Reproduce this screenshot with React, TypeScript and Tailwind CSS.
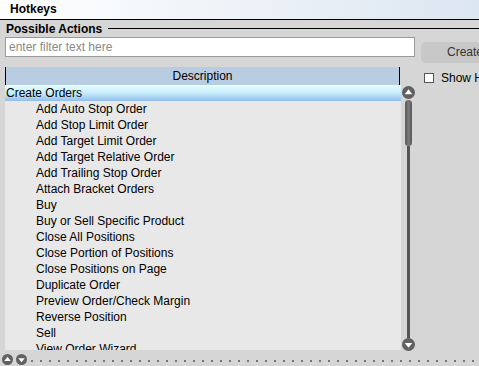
import React from "react";

const items = [
  "Add Auto Stop Order",
  "Add Stop Limit Order",
  "Add Target Limit Order",
  "Add Target Relative Order",
  "Add Trailing Stop Order",
  "Attach Bracket Orders",
  "Buy",
  "Buy or Sell Specific Product",
  "Close All Positions",
  "Close Portion of Positions",
  "Close Positions on Page",
  "Duplicate Order",
  "Preview Order/Check Margin",
  "Reverse Position",
  "Sell",
  "View Order Wizard",
];

const ArrowCircle = ({ up, size = 13 }: { up: boolean; size?: number }) => (
  <svg width={size} height={size} viewBox="0 0 12 12" className="block shrink-0">
    <circle cx="6" cy="6" r="6" fill="#616161" />
    {up ? (
      <polygon points="6,3 9.5,7.5 2.5,7.5" fill="#fff" />
    ) : (
      <polygon points="2.5,4.5 9.5,4.5 6,9" fill="#fff" />
    )}
  </svg>
);

const ScrollBar = () => (
  <div className="flex w-[14px] flex-col items-center pt-[19px]">
    <ArrowCircle up />
    <div className="mt-[1px] h-[46px] w-[7px] rounded-full bg-gradient-to-r from-[#5a5a5a] via-[#787878] to-[#5a5a5a]" />
    <div className="h-[192px] w-[3px] bg-[#555]" />
    <ArrowCircle up={false} />
  </div>
);

export default function App() {
  return (
    <div
      className="h-[366px] w-[479px] overflow-hidden bg-[#d6d6d6] text-[12px] text-black"
      style={{ fontFamily: '"Liberation Sans", Arial, sans-serif' }}
    >
      <div className="h-[20px] border-b border-black bg-gradient-to-r from-white to-[#dce6f1] pl-[10px] font-bold leading-[19px]">
        Hotkeys
      </div>

      <div className="flex h-[17px] items-center pl-[6px]">
        <span className="font-bold">Possible Actions</span>
        <div className="ml-[6px] h-px flex-1 bg-black" />
      </div>

      <div className="flex">
        <div className="ml-[5px] w-[410px] shrink-0">
          <div className="h-[20px] border border-[#9a9a9a] bg-white pl-[3px] leading-[18px] text-[#8a8a8a]">
            enter filter text here
          </div>

          <div className="mt-[10px] flex">
            <div className="w-[397px]">
              <div className="mr-[1px] h-[18px] border-x border-x-black bg-[#b8cde2] text-center leading-[19px]">
                Description
              </div>
              <div className="h-[265px] overflow-hidden bg-[#e8e8e8]">
                <div className="h-[16px] bg-gradient-to-b from-[#e6ffff] via-[#c8ecfb] to-[#92bdeb] pl-[1px] leading-[16px]">
                  Create Orders
                </div>
                {items.map((item) => (
                  <div key={item} className="h-[16px] pl-[31px] leading-[16px]">
                    {item}
                  </div>
                ))}
              </div>
            </div>
            <ScrollBar />
          </div>
        </div>

        <div className="ml-[6px] min-w-0 flex-1 overflow-hidden whitespace-nowrap">
          <div className="mt-[5px] h-[21px] w-[80px] rounded-[5px] bg-[#c8c8c8] pl-[26px] leading-[21px] text-[#333]">
            Create...
          </div>
          <div className="mt-[6px] flex items-center pl-[3px]">
            <div className="h-[10px] w-[10px] shrink-0 border border-[#555] bg-white" />
            <span className="ml-[7px]">Show Hidden</span>
          </div>
        </div>
      </div>

      <div className="flex h-[16px] items-center pl-[2px]">
        <ArrowCircle up size={11} />
        <div className="ml-[3px]">
          <ArrowCircle up={false} size={11} />
        </div>
        <div className="ml-[4px] mt-[3px] flex gap-[7px]">
          {Array.from({ length: 50 }).map((_, i) => (
            <div key={i} className="h-[2px] w-[2px] shrink-0 rounded-full bg-[#555]" />
          ))}
        </div>
      </div>
    </div>
  );
}
